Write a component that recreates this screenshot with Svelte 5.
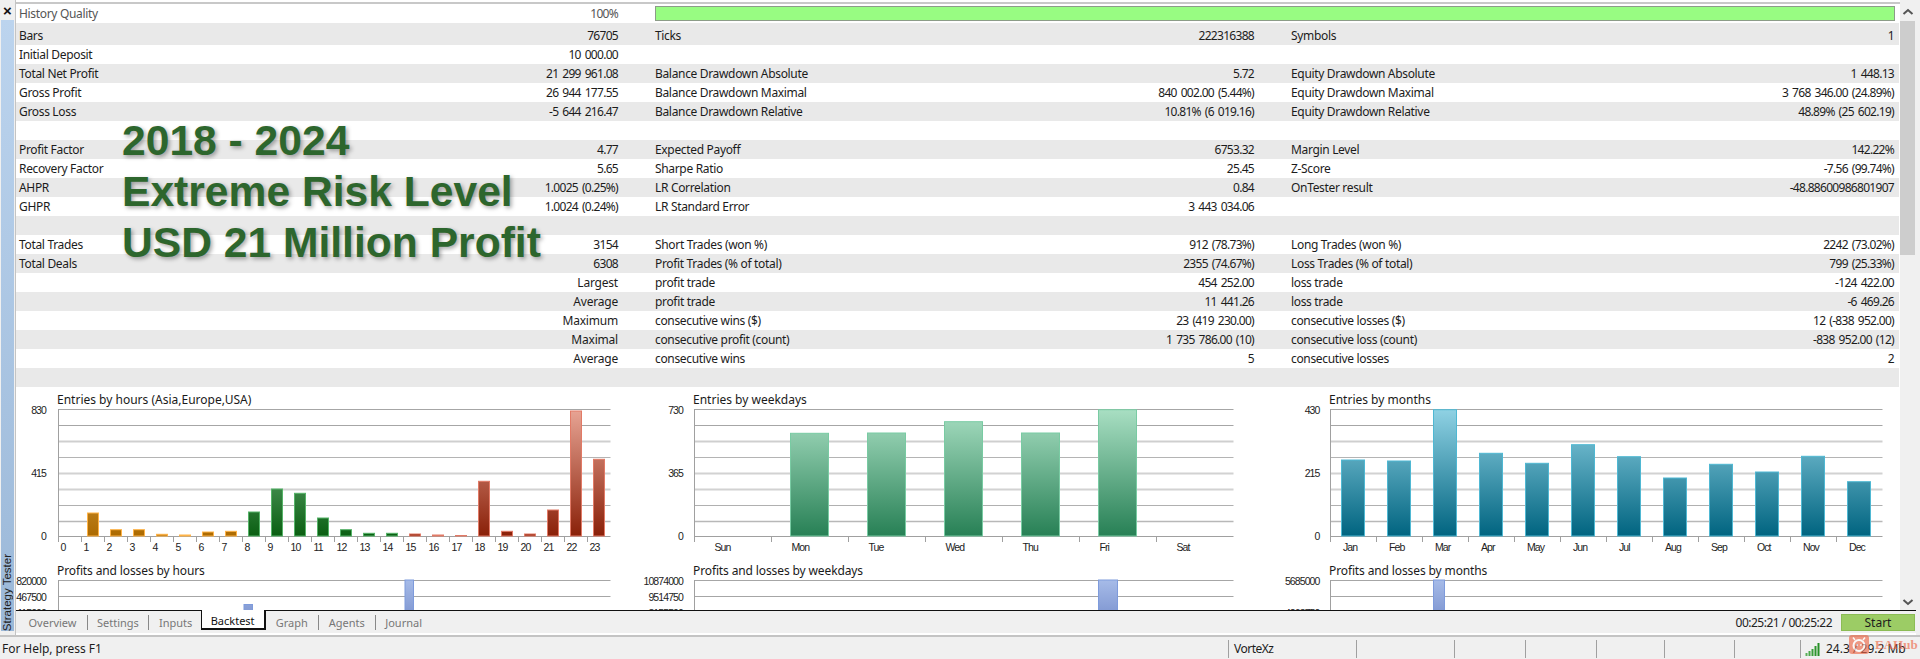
<script>
  const rows = [
    ['Bars','76705','Ticks','222316388','Symbols','1'],
    ['Initial Deposit','10 000.00','','','',''],
    ['Total Net Profit','21 299 961.08','Balance Drawdown Absolute','5.72','Equity Drawdown Absolute','1 448.13'],
    ['Gross Profit','26 944 177.55','Balance Drawdown Maximal','840 002.00 (5.44%)','Equity Drawdown Maximal','3 768 346.00 (24.89%)'],
    ['Gross Loss','-5 644 216.47','Balance Drawdown Relative','10.81% (6 019.16)','Equity Drawdown Relative','48.89% (25 602.19)'],
    ['','','','','',''],
    ['Profit Factor','4.77','Expected Payoff','6753.32','Margin Level','142.22%'],
    ['Recovery Factor','5.65','Sharpe Ratio','25.45','Z-Score','-7.56 (99.74%)'],
    ['AHPR','1.0025 (0.25%)','LR Correlation','0.84','OnTester result','-48.88600986801907'],
    ['GHPR','1.0024 (0.24%)','LR Standard Error','3 443 034.06','',''],
    ['','','','','',''],
    ['Total Trades','3154','Short Trades (won %)','912 (78.73%)','Long Trades (won %)','2242 (73.02%)'],
    ['Total Deals','6308','Profit Trades (% of total)','2355 (74.67%)','Loss Trades (% of total)','799 (25.33%)'],
    ['','Largest','profit trade','454 252.00','loss trade','-124 422.00'],
    ['','Average','profit trade','11 441.26','loss trade','-6 469.26'],
    ['','Maximum','consecutive wins ($)','23 (419 230.00)','consecutive losses ($)','12 (-838 952.00)'],
    ['','Maximal','consecutive profit (count)','1 735 786.00 (10)','consecutive loss (count)','-838 952.00 (12)'],
    ['','Average','consecutive wins','5','consecutive losses','2'],
    ['','','','','','']
  ];

  const hourH = [0,23,6.3,6.3,1.7,1,4,4.7,24,47,42.7,18,6.3,2.7,2.7,2,1,0.5,54.7,4.7,2,26,125,76.7];
  const hourBars = hourH.map((h, i) => ({ h, g: i < 8 ? 'orange' : i < 15 ? 'green' : 'red' }));
  const charts = [
    {
      title: 'Entries by hours (Asia,Europe,USA)', title2: 'Profits and losses by hours',
      x0: 16, w: 620, axis: 58.5, right: 610.5, labelR: 46, barW: 11, labelOff: 2,
      yl: ['830','415','0'], yl2: ['820000','467500','115000'],
      bars: hourBars, cats: Array.from({ length: 24 }, (_, i) => String(i)),
      pl: [{ x: 405, w: 8.5, top: 0 }, { x: 244, w: 8.5, top: 24.5 }]
    },
    {
      title: 'Entries by weekdays', title2: 'Profits and losses by weekdays',
      x0: 636, w: 634, axis: 694.5, right: 1233.5, labelR: 683, barW: 38, labelOff: 20,
      yl: ['730','365','0'], yl2: ['10874000','9514750','8155500'],
      bars: [0,102.7,103,114.3,103,126.3,0].map((h) => ({ h, g: 'mint' })),
      cats: ['Sun','Mon','Tue','Wed','Thu','Fri','Sat'],
      pl: [{ x: 1098.5, w: 19, top: 0 }]
    },
    {
      title: 'Entries by months', title2: 'Profits and losses by months',
      x0: 1270, w: 630, axis: 1330.5, right: 1882.5, labelR: 1319.5, barW: 23, labelOff: 12.5,
      yl: ['430','215','0'], yl2: ['5685000','','4263750'],
      bars: [76,75,126.3,82.7,72.7,91.3,79.3,58,71.7,64,79.7,54.3].map((h) => ({ h, g: 'teal' })),
      cats: ['Jan','Feb','Mar','Apr','May','Jun','Jul','Aug','Sep','Oct','Nov','Dec'],
      pl: [{ x: 1433.5, w: 11, top: 0 }]
    }
  ];

  const grid = [
    [4.5,'#a6a6a6',1],[20.5,'#a6a6a6',1],[36.5,'#cfcfcf',2],[52.5,'#b4b4b4',1],
    [68.5,'#d2d2d2',2],[84.5,'#d2d2d2',2],[100.5,'#b0b0b0',1],[116.5,'#b8b8b8',1.5]
  ];
  const colors = {
    orange: '#ffb347', green: '#55b368', red: '#e27a66', mint: '#79cba3', teal: '#4fb8d3'
  };
  const statusCells = [98, 71, 71, 68, 70, 66];
  const tabsLeft = [['Overview', 68.5, 9], ['Settings', 61, 9], ['Inputs', 51.7, 10]];
  const tabsRight = [['Graph', 53, 10], ['Agents', 57.5, 10], ['Journal', 60, 9]];
  const isWord = (v) => /^[A-Za-z]/.test(v);
</script>

<div class="root">
  <div class="body">
    <aside class="side">
      <div class="close">×</div>
      <div class="strip"><span>Strategy Tester</span></div>
    </aside>
    <div class="center">
      <div class="view">
        <div class="content">
          <div class="head">
            <span class="lab">History Quality</span>
            <span class="val">100%</span>
            <div class="progress"></div>
          </div>
          <div class="table">
            {#each rows as r}
              <div class="row">
                {#each [0, 2, 4] as c}
                  <div class="cell">
                    <span class="lab">{r[c]}</span>
                    <span class="val" class:word={isWord(r[c + 1])}>{r[c + 1]}</span>
                  </div>
                {/each}
              </div>
            {/each}
          </div>
          <div class="charts">
            {#each charts as ch, ci}
              <section class="chart" style="width:{ch.w}px">
                <h4 style="margin-left:{ch.axis - ch.x0 - 1.5}px">{ch.title}</h4>
                <svg width={ch.w} height="150" viewBox="{ch.x0} 0 {ch.w} 150">
                  <defs>
                    <linearGradient id="g-orange" gradientUnits="userSpaceOnUse" x1="0" y1="4" x2="0" y2="131">
                      <stop offset="0" stop-color="#f3c67a"/><stop offset="1" stop-color="#ac6a00"/>
                    </linearGradient>
                    <linearGradient id="g-green" gradientUnits="userSpaceOnUse" x1="0" y1="4" x2="0" y2="131">
                      <stop offset="0" stop-color="#90cba0"/><stop offset="1" stop-color="#0a5f12"/>
                    </linearGradient>
                    <linearGradient id="g-red" gradientUnits="userSpaceOnUse" x1="0" y1="4" x2="0" y2="131">
                      <stop offset="0" stop-color="#e8a595"/><stop offset="1" stop-color="#8a2008"/>
                    </linearGradient>
                    <linearGradient id="g-mint" gradientUnits="userSpaceOnUse" x1="0" y1="4" x2="0" y2="131">
                      <stop offset="0" stop-color="#a9dfc3"/><stop offset="1" stop-color="#278055"/>
                    </linearGradient>
                    <linearGradient id="g-teal" gradientUnits="userSpaceOnUse" x1="0" y1="4" x2="0" y2="131">
                      <stop offset="0" stop-color="#90d2e4"/><stop offset="1" stop-color="#006480"/>
                    </linearGradient>
                  </defs>
                  {#each grid as g}
                    <line x1={ch.axis} x2={ch.right} y1={g[0]} y2={g[0]} stroke={g[1]} stroke-width={g[2]}/>
                  {/each}
                  <line x1={ch.axis} x2={ch.right} y1="131.5" y2="131.5" stroke="#a0a0a0"/>
                  {#each ch.bars as b, i}
                    {@const slot = (ch.right - ch.axis) / ch.bars.length}
                    {@const sx = ch.axis + slot * i}
                    <line x1={sx} x2={sx} y1="131.5" y2="137" stroke="#a0a0a0"/>
                    {#if b.h > 0}
                      <rect
                        x={Math.round(sx + (slot - ch.barW) / 2 - 1) + 0.5}
                        y={131 - b.h}
                        width={ch.barW}
                        height={b.h}
                        fill="url(#g-{b.g})"
                        stroke={colors[b.g]}
                      />
                    {/if}
                    <text class="tick" x={sx + ch.labelOff} y="146">{ch.cats[i]}</text>
                  {/each}
                  <line x1={ch.axis} x2={ch.axis} y1="4" y2="137" stroke="#a0a0a0"/>
                  <text class="tick" text-anchor="end" x={ch.labelR} y="8.5">{ch.yl[0]}</text>
                  <text class="tick" text-anchor="end" x={ch.labelR} y="72">{ch.yl[1]}</text>
                  <text class="tick" text-anchor="end" x={ch.labelR} y="135">{ch.yl[2]}</text>
                </svg>
                <h4 class="second" style="margin-left:{ch.axis - ch.x0 - 1.5}px">{ch.title2}</h4>
                <svg width={ch.w} height="60" viewBox="{ch.x0} 0 {ch.w} 60">
                  <defs>
                    <linearGradient id="g-blue-{ci}" gradientUnits="userSpaceOnUse" x1="0" y1="0" x2="0" y2="34">
                      <stop offset="0" stop-color="#a6bbe8"/><stop offset="1" stop-color="#8198d2"/>
                    </linearGradient>
                  </defs>
                  <line x1={ch.axis} x2={ch.right} y1="0.5" y2="0.5" stroke="#a6a6a6"/>
                  <line x1={ch.axis} x2={ch.right} y1="16.5" y2="16.5" stroke="#a6a6a6"/>
                  <line x1={ch.axis} x2={ch.axis} y1="0" y2="60" stroke="#a0a0a0"/>
                  {#each ch.pl as p}
                    <rect x={p.x} y={p.top} width={p.w} height={60 - p.top} fill="url(#g-blue-{ci})" stroke="#7e9bdc"/>
                  {/each}
                  <text class="tick" text-anchor="end" x={ch.labelR} y="4.5">{ch.yl2[0]}</text>
                  <text class="tick" text-anchor="end" x={ch.labelR} y="20.5">{ch.yl2[1]}</text>
                  <text class="tick" text-anchor="end" x={ch.labelR} y="36.5">{ch.yl2[2]}</text>
                </svg>
              </section>
            {/each}
          </div>
        </div>
        <div class="scrollbar">
          <svg class="arrow" width="14" height="10" viewBox="0 0 14 10"><path d="M2.5 7 L7 3 L11.5 7" fill="none" stroke="#555" stroke-width="2"/></svg>
          <div class="thumb"></div>
          <svg class="arrow down" width="14" height="10" viewBox="0 0 14 10"><path d="M2.5 3 L7 7 L11.5 3" fill="none" stroke="#555" stroke-width="2"/></svg>
        </div>
      </div>
      <div class="tabs">
        {#each tabsLeft as t, i}
          <span class="tab" class:sep={i < 2} style="width:{t[1]}px;padding-left:{t[2]}px">{t[0]}</span>
        {/each}
        <span class="tab active">Backtest</span>
        {#each tabsRight as t, i}
          <span class="tab" class:sep={i < 2} style="width:{t[1]}px;padding-left:{t[2]}px">{t[0]}</span>
        {/each}
        <span class="time">00:25:21 / 00:25:22</span>
        <span class="start">Start</span>
      </div>
    </div>
  </div>
  <footer class="status">
    <span class="help">For Help, press F1</span>
    <span class="cell-s user">VorteXz</span>
    {#each statusCells as w}
      <span class="cell-s" style="width:{w}px"></span>
    {/each}
    <span class="cell-s net">
      <svg width="16" height="13" viewBox="0 0 16 13">
        <rect x="0.5" y="10" width="2" height="3" fill="#5ab05a"/>
        <rect x="3.5" y="8" width="2" height="5" fill="#4aa84a"/>
        <rect x="6.5" y="6" width="2" height="7" fill="#3a9e3a"/>
        <rect x="9.5" y="3" width="2" height="10" fill="#2e962e"/>
        <rect x="12.5" y="0" width="2" height="13" fill="#269026"/>
      </svg>
      <span>24.3 / 29.2 Mb</span>
    </span>
  </footer>

  <div class="promo">
    <div>2018 - 2024</div>
    <div>Extreme Risk Level</div>
    <div>USD 21 Million Profit</div>
  </div>

  <div class="mark">
    <svg width="20" height="19" viewBox="0 0 20 19">
      <rect width="20" height="19" rx="3" fill="#ee6a4a"/>
      <circle cx="10" cy="10.5" r="5.5" fill="none" stroke="#fff" stroke-width="2"/>
      <circle cx="8" cy="10" r="1" fill="#fff"/>
      <circle cx="12" cy="10" r="1" fill="#fff"/>
      <path d="M6 5 L4 2.5 M14 5 L16 2.5" stroke="#fff" stroke-width="1.5"/>
    </svg>
    <span>EAHub</span>
  </div>
</div>

<style>
  :global(body) { margin: 0; background: #fff; }
  .root {
    position: relative;
    width: 1920px;
    height: 659px;
    overflow: hidden;
    background: #f0f0f0;
    font-family: "Noto Sans", "Liberation Sans", sans-serif;
    font-size: 12px;
    color: #1c1c1c;
  }
  .body { display: flex; height: 635px; }
  .side {
    width: 15px;
    flex: none;
    display: flex;
    flex-direction: column;
    align-items: center;
    border-right: 1px solid #c4c4c4;
    background: #f0f0f0;
  }
  .close { height: 20px; font: bold 15px/21px "Liberation Sans", sans-serif; color: #111; }
  .strip {
    width: 13px;
    height: 611px;
    background: linear-gradient(#bcd4ee, #9bb8d8);
    display: flex;
    align-items: flex-end;
    justify-content: center;
  }
  .strip span {
    writing-mode: vertical-rl;
    transform: rotate(180deg);
    font: 11.5px/13px "Liberation Sans", sans-serif;
    color: #222;
  }
  .center { flex: 1; min-width: 0; display: flex; flex-direction: column; }
  .view { display: flex; height: 610px; }
  .content {
    width: 1884px;
    flex: none;
    height: 610px;
    overflow: hidden;
    background: #fff;
    padding-top: 2px;
    box-sizing: border-box;
  }
  .head {
    display: grid;
    grid-template-columns: 599px 1240px;
    column-gap: 37px;
    align-items: center;
    height: 19px;
    padding-left: 3px;
    border-top: 2px solid #c8c8c8;
    color: #555;
  }
  .head .lab, .head .val { line-height: 19px; }
  .head .val { text-align: right; }
  .head .lab { position: absolute; }
  .progress {
    height: 13px;
    background: #98fc82;
    border: 1px solid #8c9c88;
  }
  .row {
    display: grid;
    grid-template-columns: 599px 599px 603px;
    column-gap: 37px;
    height: 19px;
    padding-left: 3px;
    line-height: 19px;
    box-sizing: border-box;
    width: 1883px;
  }
  .row:nth-child(odd) { background: #e9e9e9; }
  .row:first-child { height: 22px; line-height: 26px; }
  .cell { display: flex; justify-content: space-between; white-space: nowrap; }
  .lab { letter-spacing: -0.33px; }
  .val { letter-spacing: -0.7px; word-spacing: 1.5px; }
  .val.word { letter-spacing: -0.2px; word-spacing: 0; }
  .charts { display: flex; }
  .chart { flex: none; padding-top: 4px; }
  h4 {
    margin: 0;
    height: 14px;
    line-height: 17px;
    font-size: 12px;
    font-weight: 400;
    color: #1a1a1a;
  }
  h4.second { margin-top: 6px; height: 19px; line-height: 20px; letter-spacing: -0.12px; }
  svg { display: block; overflow: visible; }
  .tick {
    font-family: "Liberation Sans", sans-serif;
    font-size: 10.5px;
    letter-spacing: -0.9px;
    fill: #222;
  }
  .scrollbar {
    width: 20px;
    flex: none;
    position: relative;
    background: #f0f0f0;
    display: flex;
    flex-direction: column;
    align-items: flex-start;
  }
  .arrow { margin: 7px 0 4px 1px; flex: none; }
  .arrow.down { margin: auto 0 3px 1px; }
  .thumb { width: 15px; height: 234px; background: #cdcdcd; flex: none; }
  .tabs {
    position: relative;
    display: flex;
    align-items: center;
    height: 24px;
    margin-right: 4px;
    padding-left: 3.5px;
    border-top: 1px solid #111;
    background: #f0f0f0;
    color: #777;
    box-sizing: border-box;
    border-bottom: 1px solid #fff;
    box-shadow: 0 1px 0 #fff;
  }
  .tab { height: 15px; line-height: 15px; font-size: 11px; white-space: nowrap; box-sizing: border-box; flex: none; }
  .tab.sep { border-right: 1px solid #888; }
  .tab.active {
    align-self: flex-start;
    margin-top: -1px;
    width: 65px;
    height: 20px;
    line-height: 19px;
    padding: 1px 0 0 9px;
    background: #fff;
    color: #111;
    border-left: 1px solid #111;
    border-right: 2px solid #111;
    border-bottom: 2px solid #111;
  }
  .time { margin-left: auto; margin-right: 9px; color: #222; letter-spacing: -0.5px; }
  .start {
    width: 72px;
    height: 15px;
    line-height: 15px;
    text-align: center;
    background: #9ccc65;
    border: 1px solid #8cbc55;
    color: #1c1c1c;
    margin-right: 1px;
  }
  .status {
    height: 24px;
    display: flex;
    align-items: flex-start;
    padding-top: 3px;
    box-sizing: border-box;
    border-top: 2px solid #c4c4c4;
  }
  .help { flex: 1; padding-left: 2px; line-height: 18px; letter-spacing: -0.05px; }
  .cell-s { height: 18px; line-height: 18px; border-left: 1px solid #a0a0a0; box-sizing: border-box; flex: none; }
  .user { width: 128px; padding-left: 5px; letter-spacing: -0.5px; }
  .net { width: 120px; padding-left: 4px; display: flex; align-items: center; gap: 5px; white-space: nowrap; }
  .promo {
    position: absolute;
    left: 122px;
    top: 115px;
    font: bold 42.6px/51px "Liberation Sans", sans-serif;
    color: #2d662d;
    text-shadow: 2px 2px 4px rgba(0, 0, 0, 0.35);
    white-space: nowrap;
  }
  .mark {
    position: absolute;
    left: 1849px;
    top: 635px;
    display: flex;
    gap: 6px;
    opacity: 0.65;
    color: #ee6a4a;
    font: bold 13px/19px "Liberation Serif", serif;
  }
</style>
